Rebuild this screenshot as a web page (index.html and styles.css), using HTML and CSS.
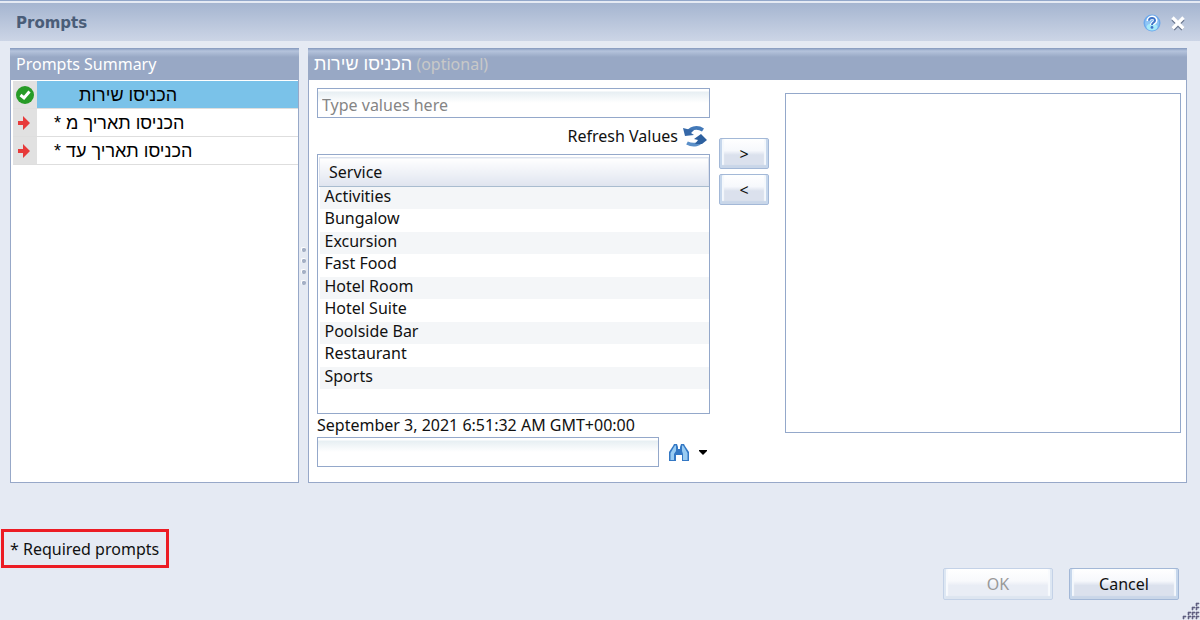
FILE: index.html
```html
<!DOCTYPE html>
<html lang="en">
<head>
    <meta charset="UTF-8">
    <meta name="viewport" content="width=device-width, initial-scale=1.0">
    <title>Prompts</title>
    <link rel="stylesheet" href="styles.css">
</head>
<body>
    <div class="dialog">
        <header class="titlebar">
            <h1>Prompts</h1>
            <button type="button" class="btn_icon" aria-label="Help">
                <svg width="18" height="18" viewBox="0 0 18 18">
                    <circle cx="9" cy="9" r="8.5" fill="#6da9ec"/>
                    <circle cx="9" cy="9" r="7" fill="#8fc5f5"/>
                    <ellipse cx="9" cy="13" rx="5.5" ry="3.5" fill="#a5eafa"/>
                    <path d="M5.500 7C5.500 2.500 12.500 2.500 12.500 6.400C12.500 9 9 8.500 9 11" fill="none" stroke="#fff" stroke-width="4"/>
                    <path d="M6 6.8C6 3 12 3 12 6.4C12 8.8 9 8.2 9 11" fill="none" stroke="#3f74c8" stroke-width="2"/>
                    <circle cx="9" cy="13.4" r="1.4" fill="#3f74c8"/>
                </svg>
            </button>
            <button type="button" class="btn_icon" aria-label="Close">
                <svg width="16" height="17" viewBox="0 0 16 17">
                    <path d="M3 4L13 14M13 4L3 14" stroke="#68748c" stroke-width="4.4"/>
                    <path d="M2.5 2.5L13.5 13.5M13.5 2.5L2.5 13.5" stroke="#fff" stroke-width="3.4"/>
                </svg>
            </button>
        </header>

        <main class="panels">
            <section class="panel summary">
                <h2>Prompts Summary</h2>
                <ul>
                    <li class="selected">
                        <span class="state">
                            <svg width="20" height="20" viewBox="0 0 20 20">
                                <circle cx="10" cy="10" r="9" fill="#279b27"/>
                                <path d="M5.5 10L9 13L14.5 6.5" fill="none" stroke="#fff" stroke-width="3"/>
                            </svg>
                        </span>
                        <a href="#">הכניסו שירות</a>
                    </li>
                    <li>
                        <span class="state">
                            <svg width="14" height="14" viewBox="0 0 14 14">
                                <path d="M0 5H5V0L12 7L5 14V9H0Z" fill="#e73a3a"/>
                            </svg>
                        </span>
                        <a href="#">* הכניסו תאריך מ</a>
                    </li>
                    <li>
                        <span class="state">
                            <svg width="14" height="14" viewBox="0 0 14 14">
                                <path d="M0 5H5V0L12 7L5 14V9H0Z" fill="#e73a3a"/>
                            </svg>
                        </span>
                        <a href="#">* הכניסו תאריך עד</a>
                    </li>
                </ul>
            </section>

            <div class="splitter"><i></i><i></i><i></i><i></i></div>

            <section class="panel detail">
                <h2><bdi>הכניסו שירות</bdi> <span>(optional)</span></h2>
                <div class="detail_body">
                    <div class="picker">
                        <input type="text" class="field" placeholder="Type values here" aria-label="Type values here">
                        <button type="button" class="btn_refresh">
                            Refresh Values
                            <svg width="24" height="21" viewBox="0 0 24 21">
                                <path d="M5 8C6 2 14 0 20 4" fill="none" stroke="#4379b8" stroke-width="3.6"/>
                                <path d="M0 2L2 10L11 9L8 7L11 4L4 3Z" fill="#3568a8"/>
                                <path d="M19 13C18 19 10 20 4 17" fill="none" stroke="#5b8fc8" stroke-width="3.6"/>
                                <path d="M24 14L18 8L11 13L15 14L12 18L19 18Z" fill="#2d609f"/>
                            </svg>
                        </button>
                        <div class="values">
                            <table>
                                <thead>
                                    <tr><th>Service</th></tr>
                                </thead>
                                <tbody>
                                    <tr><td>Activities</td></tr>
                                    <tr><td>Bungalow</td></tr>
                                    <tr><td>Excursion</td></tr>
                                    <tr><td>Fast Food</td></tr>
                                    <tr><td>Hotel Room</td></tr>
                                    <tr><td>Hotel Suite</td></tr>
                                    <tr><td>Poolside Bar</td></tr>
                                    <tr><td>Restaurant</td></tr>
                                    <tr><td>Sports</td></tr>
                                </tbody>
                            </table>
                        </div>
                        <label class="date" for="search">September 3, 2021 6:51:32 AM GMT+00:00</label>
                        <div class="search">
                            <input type="text" class="field" id="search">
                            <button type="button" class="btn_icon" aria-label="Search">
                                <svg width="20" height="19" viewBox="0 0 20 19">
                                    <path d="M0 18V9L4 3L5 1H8L9 4V6H11V4L12 1H15L16 3L20 9V18H13V12H7V18Z" fill="#3478c4"/>
                                    <path d="M1.500 17V10L5 4L6 2.500H7V8L5 11V17ZM14 17V11L13 8V2.500H14L15 4L18.500 10V17Z" fill="#9accf2"/>
                                </svg>
                            </button>
                            <button type="button" class="btn_icon" aria-label="Search options">
                                <svg width="8" height="5" viewBox="0 0 8 5"><path d="M0 0H8V1L4 5L0 1Z" fill="#000"/></svg>
                            </button>
                        </div>
                    </div>
                    <div class="move">
                        <button type="button" class="btn">&gt;</button>
                        <button type="button" class="btn">&lt;</button>
                    </div>
                    <div class="chosen"></div>
                </div>
            </section>
        </main>

        <p class="required">* Required prompts</p>

        <footer class="actions">
            <button type="button" class="btn" disabled>OK</button>
            <button type="button" class="btn">Cancel</button>
        </footer>

        <svg class="grip" width="18" height="18" viewBox="0 0 18 18">
            <path d="M14 1h3v1h-2v2h-1zM10 5h3v1h-2v2h-1zM14 5h3v1h-2v2h-1zM6 10h3v1h-2v2h-1zM10 10h3v1h-2v2h-1zM14 10h3v1h-2v2h-1zM1 14h3v1h-2v2h-1zM6 14h3v1h-2v2h-1zM10 14h3v1h-2v2h-1zM14 14h3v1h-2v2h-1z" fill="#606080" stroke="#606080" stroke-width="0.6"/>
        </svg>
    </div>
</body>
</html>
```
FILE: styles.css
```css
*{
    margin: 0;
    padding: 0;
    box-sizing: border-box;
}
body{
    background-color: #e5eaf3;
    color: #111;
    font-family: "Noto Sans", "Open Sans", "DejaVu Sans", sans-serif;
    font-size: 16px;
    line-height: 22px;
}
button, input{
    font: inherit;
    color: inherit;
}
svg{
    display: block;
    flex: none;
}
.dialog{
    position: relative;
    min-height: 100vh;
    border-top: 1px solid #92a7ca;
}
.titlebar{
    display: flex;
    align-items: center;
    gap: 9px;
    height: 40px;
    padding: 2px 14px 0 16px;
    border-top: 2px solid #e5eaf3;
    background: linear-gradient(#a5b5d0, #ccd5e6);
    background-clip: padding-box;
}
.titlebar h1{
    flex: 1;
    color: #4a5d78;
    font-family: "DejaVu Sans", sans-serif;
    font-size: 15px;
}
.btn_icon{
    border: none;
    background: none;
}
.panels{
    display: flex;
    padding: 7px 13px 0 10px;
}
.panel{
    min-height: 435px;
    border: 1px solid #97a8c8;
    border-top: none;
    background-color: white;
}
.panel h2{
    height: 32px;
    padding: 0 6px;
    margin: 0 -1px;
    background: linear-gradient(#8499bd, #b5c3dc 3px, #98a8c5 9px);
    color: white;
    font-size: 16px;
    font-weight: normal;
    line-height: 32px;
}
.panel h2 span{
    color: #c8c8c8;
}
.panel h2 bdi{
    font-family: "Liberation Sans", sans-serif;
    font-size: 18px;
}
.summary{
    width: 289px;
}
.summary ul{
    padding: 1px 0 0 2px;
    list-style-type: none;
}
.summary li{
    display: flex;
    height: 28px;
    border-bottom: 1px solid #dedede;
}
.summary a{
    flex: 1;
    padding-left: 17px;
    color: black;
    font-family: "Liberation Sans", sans-serif;
    font-size: 18px;
    line-height: 28px;
    text-decoration: none;
}
.summary .selected a{
    padding-left: 42px;
    background-color: #7ac2e9;
}
.state{
    display: flex;
    align-items: center;
    justify-content: center;
    width: 24px;
    background-color: #e1e1e1;
}
.splitter{
    display: flex;
    flex-direction: column;
    align-items: center;
    justify-content: center;
    gap: 6px;
    width: 9px;
}
.splitter i{
    width: 5px;
    height: 5px;
    border-radius: 2px;
    background-color: #a3afc5;
    border-top: 1px solid white;
    border-left: 1px solid white;
}
.detail{
    flex: 1;
}
.detail_body{
    display: flex;
    padding: 8px 5px 0 8px;
}
.picker{
    flex: 1;
    display: flex;
    flex-direction: column;
}
.field{
    width: 100%;
    height: 30px;
    padding: 4px 4px 0;
    border: 1px solid #94a8ca;
    background: linear-gradient(white 2px, #e7eff3 3px, white 14px);
    outline: none;
}
.field::placeholder{
    color: #858585;
}
.btn_refresh{
    display: flex;
    align-items: center;
    align-self: flex-end;
    gap: 5px;
    height: 36px;
    padding-right: 3px;
    border: none;
    background: none;
}
.values{
    height: 260px;
    padding: 2px 0 0 1px;
    border: 1px solid #94a8ca;
}
.values table{
    width: 100%;
    border-collapse: collapse;
}
.values th{
    height: 29px;
    padding-left: 9px;
    border: 1px solid #dce2ee;
    border-bottom-color: #a9bccf;
    background: linear-gradient(white, #dfe4ef);
    font-weight: normal;
    text-align: left;
}
.values td{
    height: 23px;
    padding-left: 5px;
    line-height: 18px;
    vertical-align: top;
}
.values tr:nth-child(odd) td{
    height: 22px;
    background-color: #f4f6f8;
}
.date{
    height: 23px;
    white-space: nowrap;
}
.search{
    display: flex;
    align-items: center;
    gap: 10px;
    padding-right: 3px;
}
.search .field{
    flex: 1;
    min-width: 0;
}
.move{
    display: flex;
    flex-direction: column;
    gap: 5px;
    padding: 50px 16px 0 9px;
}
.btn{
    height: 31px;
    border: 1px solid #a3b8d7;
    border-radius: 2px;
    background: linear-gradient(white, #f6f8fc 40%, #dbe1ed 55%, #dbe1ed);
    box-shadow: inset 2px 0 #c6d7ec, inset -2px 0 #c6d7ec, inset 0 -3px 1px #c9d6e8, inset 4px 0 1px #f4f8fc, inset -4px 0 1px #f4f8fc;
}
.btn:disabled{
    border-color: #c4d2e7;
    background: linear-gradient(white, #f8f9fc 40%, #e9edf5 55%, #e9edf5);
    box-shadow: inset 2px 0 #dde7f3, inset -2px 0 #dde7f3, inset 0 -3px 1px #dde5f0, inset 4px 0 1px #f8fafd, inset -4px 0 1px #f8fafd;
    color: #999;
}
.move .btn{
    width: 50px;
}
.chosen{
    flex: 1 1 3px;
    height: 340px;
    margin-top: 5px;
    border: 1px solid #94a8ca;
}
.required{
    width: 168px;
    height: 39px;
    margin: 46px 0 0 1px;
    padding-left: 6px;
    border: 3px solid #ec1c24;
    line-height: 34px;
}
.actions{
    display: flex;
    justify-content: flex-end;
    gap: 16px;
    padding: 0 21px 20px;
}
.actions .btn{
    width: 110px;
    height: 32px;
}
.grip{
    position: absolute;
    right: 0;
    bottom: 0;
}
```
